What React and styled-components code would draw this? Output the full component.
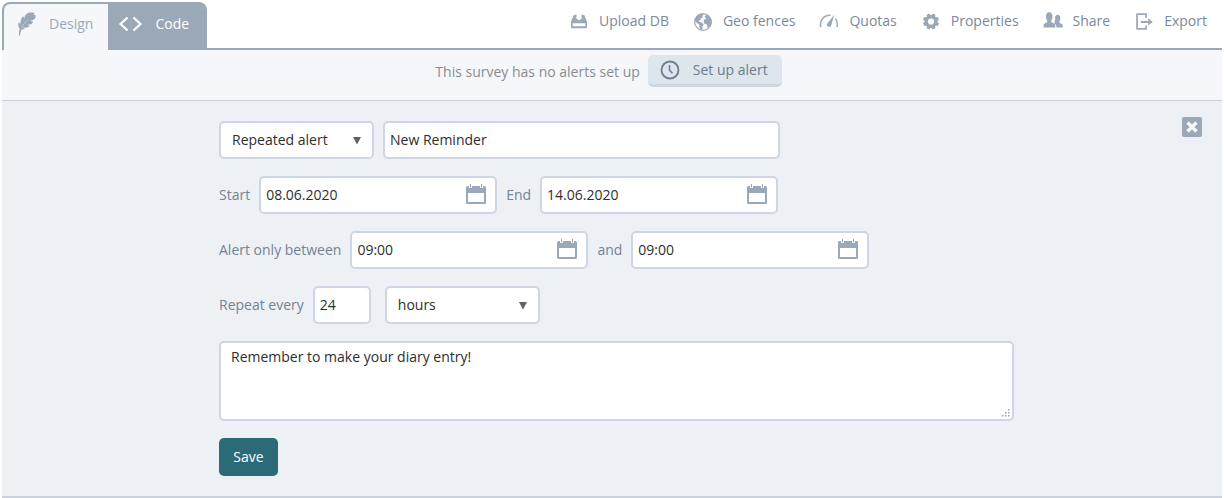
import React, { useState } from "react";
import styled, { createGlobalStyle, css } from "styled-components";

const steel = "#9ba8b7";
const edge = "#cdd6e2";

const GlobalStyle = createGlobalStyle`
  *, *::before, *::after { box-sizing: border-box; }
  body {
    margin: 0;
    background: #fff;
    color: #2e2e2e;
    font: 14px/20px "Open Sans", "Noto Sans", sans-serif;
  }
  button, input, select, textarea { font: inherit; color: inherit; margin: 0; }
`;

const Page = styled.div`
  padding: 2px 2px 0;
`;

const Header = styled.header`
  display: flex;
  justify-content: space-between;
  align-items: flex-start;
  height: 48px;
  border-bottom: 2px solid ${steel};
`;

const Tabs = styled.nav`
  display: flex;
  height: 48px;
`;

const Tab = styled.a`
  display: flex;
  align-items: center;
  gap: 12px;
  padding: 0 ${(p) => (p.$active ? 15 : 18)}px 6px ${(p) => (p.$active ? 13 : 10)}px;
  text-decoration: none;
  border-top: 2px solid ${steel};
  ${(p) =>
    p.$active
      ? css`
          color: ${steel};
          background: #f5f7fb;
          border-left: 2px solid ${steel};
          border-top-left-radius: 8px;
        `
      : css`
          color: #fff;
          background: ${steel};
          border-top-right-radius: 8px;
        `}
`;

const Actions = styled.nav`
  display: flex;
  gap: 24px;
  padding: 9px 15px 0 0;
`;

const Action = styled.a`
  display: flex;
  align-items: center;
  gap: 10px;
  color: #7b8a9b;
  text-decoration: none;
  white-space: nowrap;
  svg { color: ${steel}; }
`;

const Notice = styled.section`
  display: flex;
  justify-content: center;
  align-items: flex-start;
  gap: 8px;
  height: 51px;
  padding: 5px 7px 0 0;
  color: #8a8c8f;
  background: #f5f7fb;
  border-bottom: 1px solid #c6d0dc;
`;

const NoticeText = styled.p`
  margin: 0;
  padding-top: 7px;
`;

const SetupButton = styled.button`
  display: flex;
  align-items: center;
  gap: 13px;
  height: 32px;
  padding: 0 14px 0 12px;
  color: #6c7c8e;
  background: #dde5ed;
  border: 0;
  border-bottom: 3px solid #cdd6e2;
  border-radius: 5px;
`;

const Panel = styled.main`
  display: flex;
  justify-content: space-between;
  align-items: flex-start;
  gap: 20px;
  padding: 16px 20px 20px 217px;
  background: #edf1f6;
  border-bottom: 2px solid #cbd2db;
`;

const Form = styled.form`
  display: flex;
  flex-direction: column;
  align-items: flex-start;
  gap: 17px;
  flex: 1;
  max-width: 795px;
  padding-top: 4px;
`;

const Row = styled.div`
  display: flex;
  align-items: center;
  gap: 9px;
  color: #748294;
`;

const box = css`
  height: 38px;
  color: #2e2e2e;
  background: #fff;
  border: 2px solid ${edge};
  border-radius: 5px;
`;

const TextInput = styled.input`
  ${box}
  width: ${(p) => p.$width}px;
  padding: 0 5px 2px;
`;

const SelectWrap = styled.div`
  position: relative;
  margin-left: ${(p) => (p.$spaced ? 5 : 0)}px;
  svg {
    position: absolute;
    right: 12px;
    top: 15px;
    pointer-events: none;
  }
`;

const Select = styled.select`
  ${box}
  width: 155px;
  padding: 0 28px 0 11px;
  appearance: none;
`;

const PickerBox = styled.div`
  ${box}
  display: flex;
  align-items: center;
  width: 238px;
  padding: 0 8px 2px 5px;
`;

const PickerInput = styled.input`
  flex: 1;
  min-width: 0;
  padding: 2px 0 0;
  border: 0;
  background: none;
`;

const IconButton = styled.button`
  display: flex;
  padding: 0;
  border: 0;
  background: none;
  color: ${steel};
`;

const MessageWrap = styled.div`
  position: relative;
  width: 100%;
  svg {
    position: absolute;
    right: 4px;
    bottom: 4px;
    pointer-events: none;
  }
`;

const Message = styled.textarea`
  ${box}
  display: block;
  width: 100%;
  height: 80px;
  padding: 4px 10px;
  resize: vertical;
  &::-webkit-resizer { display: none; }
`;

const SaveButton = styled.button`
  height: 38px;
  min-width: 59px;
  padding: 0 14px;
  color: #fff;
  background: #2b6b77;
  border: 0;
  border-radius: 5px;
`;

const Svg = ({ w = 20, h = 20, children }) => (
  <svg width={w} height={h} viewBox={`0 0 ${w} ${h}`} fill="currentColor" aria-hidden="true">
    {children}
  </svg>
);

const FeatherIcon = () => (
  <Svg w={20} h={26}>
    <path d="M2.800 25.500 2 24c-.2-2.200 0-4.300.7-6.300C1.200 15.700.9 13.500 1.700 11.400c.7.200 1.400.7 1.800 1.300C3.300 9.800 4.100 7.200 6.300 5.200c.3.900.6 1.600 1.100 2.200.3-3.600 2.600-6 6.300-6 2-.1 3.700.3 4 1.200-.6.300-1.100.8-1.500 1.300 1.100-.3 2.100-.1 2.400.5.200 2-.7 3.600-2.600 4.600-.7.300-1.600.3-2.500.2.700.8 1.600 1.300 2.700 1.500-.9 2.300-2.800 3.300-5.500 2.700.5.800 1.200 1.300 2 1.600-2 1.600-4.200 2-6.500 1.300.4.700 1 1.200 1.700 1.500-1.100.6-2.100.8-3.300.6-.9 2.200-1.500 4.600-1.800 7.100z" />
    <path d="M4.500 17.200C6 13.800 8 11.300 10.500 9.200" stroke="#f5f7fb" strokeWidth=".4" fill="none" />
  </Svg>
);
const CodeIcon = () => (
  <Svg w={25} h={16}>
    <path d="M9.500 1.500 2.500 8l7 6.500M15.500 1.500l7 6.500-7 6.500" fill="none" stroke="currentColor" strokeWidth="2.200" />
  </Svg>
);
const UploadIcon = () => (
  <Svg>
    <path d="M4.800 4 2 10.500V16a1.200 1.200 0 0 0 1.200 1.200h13.600A1.200 1.200 0 0 0 18 16v-5.500L15.200 4l-2.700-.2v2.700h1.300L10 9.600 6.200 6.500h1.300V3.800zM3.700 12.300h12.600v2.900H3.700z" fillRule="evenodd" />
  </Svg>
);
const GlobeIcon = () => (
  <Svg>
    <circle cx="10" cy="11" r="8.300" fill="none" stroke="currentColor" strokeWidth="1.200" />
    <path d="M2 8.500C3 5 6 2.600 9.600 2.500l1.200 1.600-1.600.6.700 1.500-2.200 1.300-.2 1.700-1.800.4.600 1.500 2.500.3 2 2-1.300 2-.3 3-1.500.9-1.300-3-.1-2.500-2-1.500L2 10z" />
    <path d="M11.500 5 14.400 3.700c2 1.300 3.500 3.200 4 5.600l.1 2.600-1.700 4.200-2.200.6-.7-3.300-2.500-.6-1-2.400 1.300-2.300 2-.3-1.500-1.200z" />
  </Svg>
);
const GaugeIcon = () => (
  <Svg>
    <path d="M1.800 16C.5 9.500 4.300 4.200 11.500 4.300M16.400 7.600c1.800 2.300 2.300 5.100 1.600 8.400" fill="none" stroke="currentColor" strokeWidth="1.500" />
    <path d="M15.200 3.800 12.300 14.200a2.200 2.200 0 1 1-3.800-2z" />
  </Svg>
);
const GearIcon = () => (
  <Svg>
    <circle cx="10" cy="10.500" r="4.800" fill="none" stroke="currentColor" strokeWidth="3.400" />
    {[22.5, 67.5, 112.5, 157.5, 202.5, 247.5, 292.5, 337.5].map((a) => (
      <path key={a} d="M8 5 8.500 2.500h3L12 5z" transform={`rotate(${a} 10 10.500)`} />
    ))}
  </Svg>
);
const ShareIcon = () => (
  <Svg>
    <path d="M13.300 15.500c-.2-1.900-1-2.700-2.400-3.300.9-.6 1-1.700.7-2.500.7-1 .8-2.300.5-3.500.4-1.200 1-2.500 2.500-2.500 2 0 3 1.600 2.600 3.900.3.400.1 1.300-.3 1.600-.2 1-.4 1.300-.6 1.800.1 1.300 2.600 1.500 3.200 2.700l.3 2.800h-6.500z" />
    <path d="M.5 16.500.8 13.500c.6-1.600 3.500-1.700 3.700-3.200-.5-.6-.8-1.300-1-2.200-.6-.4-.7-1.300-.3-1.800C2.600 3.300 3.800 1.200 6.300 1.200s3.500 2 3 5.100c.4.500.3 1.400-.3 1.800-.2.900-.5 1.600-1 2.200.1 1.500 3.500 1.600 4.100 3.200l.3 3z" />
  </Svg>
);
const ExportIcon = () => (
  <Svg>
    <path d="M12.200 7V3.200H3v14.600h9.200V14.500" fill="none" stroke="currentColor" strokeWidth="1.700" strokeLinejoin="round" />
    <path d="M7 9.900h7.200V7.300l4.600 3.600-4.600 3.600v-2.600H7z" />
  </Svg>
);
const ClockIcon = () => (
  <Svg>
    <g fill="none" stroke="currentColor">
      <circle cx="10" cy="10" r="8.500" strokeWidth="1.800" />
      <path d="M9.500 5v5.300l3 3" strokeWidth="1.500" />
    </g>
  </Svg>
);
const CalendarIcon = () => (
  <Svg w={22} h={22}>
    <path d="M1 4.500a1.500 1.500 0 0 1 1.500-1.500H4v2h3V3h8v2h3V3h1.500A1.500 1.500 0 0 1 21 4.500v15a1.500 1.500 0 0 1-1.500 1.500h-17A1.500 1.500 0 0 1 1 19.500zM3 10v9h16v-9z" fillRule="evenodd" />
    <path d="M5 1h1v3.500H5zM16 1h1v3.500h-1z" />
  </Svg>
);
const CloseIcon = () => (
  <Svg>
    <rect width="20" height="20" rx="2" />
    <path d="m5.500 5.500 9 9m0-9-9 9" stroke="#f5f7fb" strokeWidth="3.400" />
  </Svg>
);
const Arrow = () => (
  <svg width="10" height="9" viewBox="0 0 10 9" aria-hidden="true">
    <path d="M1 1h8L5 8.500z" fill="#616161" />
  </svg>
);
const Grip = () => (
  <svg width="9" height="9" viewBox="0 0 9 9" fill="#a0a0a0" aria-hidden="true">
    {[[7, 1], [4, 4], [7, 4], [1, 7], [4, 7], [7, 7]].map(([x, y]) => (
      <rect key={`${x}-${y}`} x={x} y={y} width="1.500" height="1.500" />
    ))}
  </svg>
);

const actions = [
  ["Upload DB", UploadIcon],
  ["Geo fences", GlobeIcon],
  ["Quotas", GaugeIcon],
  ["Properties", GearIcon],
  ["Share", ShareIcon],
  ["Export", ExportIcon],
];

function Picker({ id, label, initial }) {
  const [value, setValue] = useState(initial);
  return (
    <>
      <label htmlFor={id}>{label}</label>
      <PickerBox>
        <PickerInput id={id} value={value} onChange={(e) => setValue(e.target.value)} />
        <IconButton type="button" aria-label={`Choose ${label}`}>
          <CalendarIcon />
        </IconButton>
      </PickerBox>
    </>
  );
}

export default function App() {
  return (
    <Page>
      <GlobalStyle />
      <Header>
        <Tabs>
          <Tab href="#design" $active>
            <FeatherIcon />
            Design
          </Tab>
          <Tab href="#code">
            <CodeIcon />
            Code
          </Tab>
        </Tabs>
        <Actions>
          {actions.map(([name, Icon]) => (
            <Action key={name} href="#">
              <Icon />
              {name}
            </Action>
          ))}
        </Actions>
      </Header>
      <Notice>
        <NoticeText>This survey has no alerts set up</NoticeText>
        <SetupButton type="button">
          <ClockIcon />
          Set up alert
        </SetupButton>
      </Notice>
      <Panel>
        <Form onSubmit={(e) => e.preventDefault()}>
          <Row>
            <SelectWrap>
              <Select aria-label="Alert type" defaultValue="Repeated alert">
                <option>Repeated alert</option>
                <option>Single alert</option>
              </Select>
              <Arrow />
            </SelectWrap>
            <TextInput $width={397} aria-label="Alert name" defaultValue="New Reminder" />
          </Row>
          <Row>
            <Picker id="start" label="Start" initial="08.06.2020" />
            <Picker id="end" label="End" initial="14.06.2020" />
          </Row>
          <Row>
            <Picker id="from" label="Alert only between" initial="09:00" />
            <Picker id="to" label="and" initial="09:00" />
          </Row>
          <Row>
            <label htmlFor="every">Repeat every</label>
            <TextInput id="every" $width={58} defaultValue="24" />
            <SelectWrap $spaced>
              <Select aria-label="Repeat unit" defaultValue="hours">
                <option>hours</option>
                <option>days</option>
              </Select>
              <Arrow />
            </SelectWrap>
          </Row>
          <MessageWrap>
            <Message aria-label="Message" defaultValue="Remember to make your diary entry!" />
            <Grip />
          </MessageWrap>
          <SaveButton type="submit">Save</SaveButton>
        </Form>
        <IconButton type="button" aria-label="Close">
          <CloseIcon />
        </IconButton>
      </Panel>
    </Page>
  );
}
